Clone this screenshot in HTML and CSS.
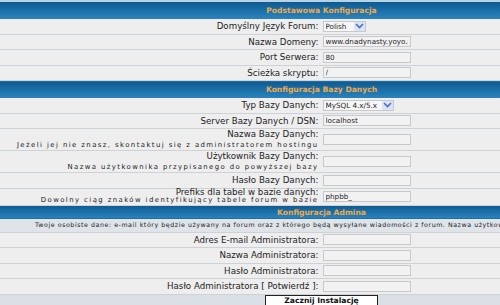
FILE: index.html
```html
<!DOCTYPE html>
<html lang="pl">
<head>
    <meta charset="UTF-8">
    <title>Instalacja phpBB</title>
    <link rel="stylesheet" href="styles.css">
</head>
<body>

    <!-- Install form -->
    <form class="install" action="#" method="post">
        <table class="forumline">
            <tr>
                <th class="cat" colspan="2">Podstawowa Konfiguracja</th>
            </tr>
            <tr>
                <td class="label">Domyślny Język Forum:</td>
                <td class="value">
                    <span class="select sel-lang">
                        <select name="lang">
                            <option>Polish</option>
                            <option>English</option>
                        </select>
                        <span class="arrow"><svg width="9" height="6" viewBox="0 0 9 6"><path d="M1 1 L4.5 4.5 L8 1" fill="none" stroke="#4d6fc0" stroke-width="1.6"/></svg></span>
                    </span>
                </td>
            </tr>
            <tr>
                <td class="label">Nazwa Domeny:</td>
                <td class="value"><input type="text" value="www.dnadynasty.yoyo.pl"></td>
            </tr>
            <tr>
                <td class="label">Port Serwera:</td>
                <td class="value"><input type="text" value="80"></td>
            </tr>
            <tr>
                <td class="label">Ścieżka skryptu:</td>
                <td class="value"><input type="text" value="/"></td>
            </tr>

            <tr>
                <th class="cat" colspan="2">Konfiguracja Bazy Danych</th>
            </tr>
            <tr>
                <td class="label">Typ Bazy Danych:</td>
                <td class="value">
                    <span class="select sel-db">
                        <select name="dbms">
                            <option>MySQL 4.x/5.x</option>
                            <option>PostgreSQL 7.x</option>
                        </select>
                        <span class="arrow"><svg width="9" height="6" viewBox="0 0 9 6"><path d="M1 1 L4.5 4.5 L8 1" fill="none" stroke="#4d6fc0" stroke-width="1.6"/></svg></span>
                    </span>
                </td>
            </tr>
            <tr>
                <td class="label">Server Bazy Danych / DSN:</td>
                <td class="value"><input type="text" value="localhost"></td>
            </tr>
            <tr class="tall">
                <td class="label">Nazwa Bazy Danych:<br><span class="hint">Jeżeli jej nie znasz, skontaktuj się z administratorem hostingu</span></td>
                <td class="value"><input type="text" value=""></td>
            </tr>
            <tr class="tall">
                <td class="label">Użytkownik Bazy Danych:<br><span class="hint">Nazwa użytkownika przypisanego do powyższej bazy</span></td>
                <td class="value"><input type="text" value=""></td>
            </tr>
            <tr>
                <td class="label">Hasło Bazy Danych:</td>
                <td class="value"><input type="password" value=""></td>
            </tr>
            <tr class="tight">
                <td class="label">Prefiks dla tabel w bazie danych:<br><span class="hint">Dowolny ciąg znaków identyfikujący tabele forum w bazie</span></td>
                <td class="value"><input type="text" value="phpbb_"></td>
            </tr>

            <tr>
                <th class="cat cat-small" colspan="2">Konfiguracja Admina</th>
            </tr>
            <tr>
                <td class="note" colspan="2">Twoje osobiste dane: e-mail który będzie używany na forum oraz z którego będą wysyłane wiadomości z forum. Nazwa użytkownika i hasło</td>
            </tr>
            <tr>
                <td class="label">Adres E-mail Administratora:</td>
                <td class="value"><input type="text" value=""></td>
            </tr>
            <tr>
                <td class="label">Nazwa Administratora:</td>
                <td class="value"><input type="text" value=""></td>
            </tr>
            <tr>
                <td class="label">Hasło Administratora:</td>
                <td class="value"><input type="password" value=""></td>
            </tr>
            <tr>
                <td class="label">Hasło Administratora [ Potwierdź ]:</td>
                <td class="value"><input type="password" value=""></td>
            </tr>
            <tr>
                <td class="catBottom" colspan="2"><button type="submit">Zacznij Instalację</button></td>
            </tr>
        </table>
    </form>

</body>
</html>
```

FILE: styles.css
```css
html {
    overflow: hidden;
}

body {
    margin: 0;
    background-color: #eeeeee;
    font-family: "DejaVu Sans", Verdana, sans-serif;
    color: #222;
}

.forumline {
    width: 643px;
    border-collapse: collapse;
    border-top: 2px solid #b9d2e3;
}

.cat {
    height: 17px;
    padding: 0;
    background: linear-gradient(#0d5a90, #1f74ad 60%, #2c83bd);
    color: #f0a948;
    font-size: 7.6px;
    font-weight: bold;
    text-align: center;
}

.cat-small {
    height: 13px;
}

td {
    background-color: #eeeeee;
    border-bottom: 1px solid #cfd2d5;
    height: 14.5px;
    padding: 0;
    font-size: 8.7px;
    line-height: 10px;
}

.label {
    width: 50%;
    text-align: right;
    padding-right: 3px;
}

.value {
    padding-left: 1px;
}

.tall td {
    height: 20.5px;
}

.tight td {
    height: 14px;
    line-height: 7.5px;
}

.hint {
    font-size: 6.9px;
    letter-spacing: 1.42px;
}

.note {
    height: 13px;
    padding-left: 35px;
    background-color: #dfe4e8;
    text-align: left;
    font-size: 6.3px;
    letter-spacing: 0.55px;
    white-space: nowrap;
}

input {
    box-sizing: border-box;
    width: 88px;
    height: 11px;
    margin: 0;
    padding: 0 2px;
    border: 1px solid #c6c8ca;
    background-color: #f2f2f2;
    font-family: "DejaVu Sans", Verdana, sans-serif;
    font-size: 7.2px;
    color: #222;
    vertical-align: middle;
}

.select {
    position: relative;
    display: inline-block;
    vertical-align: middle;
}

.select select {
    appearance: none;
    box-sizing: border-box;
    height: 11px;
    margin: 0;
    padding: 0 0 0 2px;
    border: 1px solid #c6c8ca;
    background-color: #f6f6f6;
    font-family: "DejaVu Sans", Verdana, sans-serif;
    font-size: 7.2px;
    color: #222;
    display: block;
}

.sel-lang select {
    width: 43px;
}

.sel-db select {
    width: 71px;
}

.select .arrow {
    position: absolute;
    top: 1px;
    right: 1px;
    width: 11px;
    height: 9px;
    background-color: #d9e4f5;
    display: flex;
    align-items: center;
    justify-content: center;
}

.catBottom {
    height: 12px;
    background-color: #d9dfe4;
    border-bottom: none;
    text-align: center;
    vertical-align: top;
}

button {
    width: 113px;
    height: 12px;
    margin: 0;
    padding: 0;
    border: 1px solid #222;
    background-color: #fff;
    font-family: "DejaVu Sans", Verdana, sans-serif;
    font-size: 7.6px;
    font-weight: bold;
    line-height: 10px;
    color: #111;
}
```
